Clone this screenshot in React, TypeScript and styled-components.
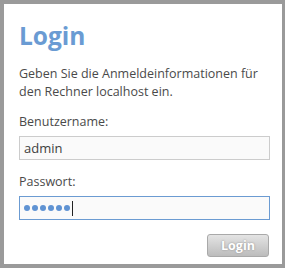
import React from "react";
import styled, { createGlobalStyle } from "styled-components";

const Global = createGlobalStyle`
  html, body { margin: 0; padding: 0; background: #9a9a9a; }
  body { width: 285px; height: 268px; overflow: hidden; }
`;

const Frame = styled.div`
  box-sizing: border-box;
  width: 285px;
  height: 268px;
  padding: 4px 3px 4px 4px;
  background: #9a9a9a;
`;

const Card = styled.div`
  box-sizing: border-box;
  height: 100%;
  background: #ffffff;
  padding: 16px 10px 0 15px;
  font-family: "Open Sans", "Noto Sans", sans-serif;
  color: #4a4a4a;
  display: flex;
  flex-direction: column;
`;

const Title = styled.h1`
  margin: 0;
  font-size: 24.5px;
  line-height: 32px;
  font-weight: 700;
  color: #6a9bd3;
`;

const Intro = styled.p`
  margin: 13px 0 0 0;
  font-size: 12.5px;
  line-height: 18px;
`;

const Label = styled.label<{ $mt: number }>`
  display: block;
  margin-top: ${(p) => p.$mt}px;
  font-size: 12.5px;
  line-height: 16px;
`;

const Field = styled.div<{ $focus?: boolean }>`
  box-sizing: border-box;
  margin-top: 6px;
  width: 251px;
  height: 24px;
  border: 1px solid ${(p) => (p.$focus ? "#6b9bd2" : "#cccccc")};
  background: #fafafa;
  display: flex;
  align-items: center;
  padding-left: 4px;
  font-size: 13px;
  color: #404040;
`;

const Dots = styled.span`
  display: flex;
  align-items: center;
`;

const Dot = styled.span`
  width: 6px;
  height: 6px;
  border-radius: 50%;
  background: #5f93d3;
  margin-right: 2px;
`;

const Caret = styled.span`
  width: 1px;
  height: 15px;
  background: #222;
`;

const Actions = styled.div`
  display: flex;
  justify-content: flex-end;
  margin-top: 14px;
  width: 251px;
`;

const Button = styled.button`
  box-sizing: border-box;
  width: 62px;
  height: 23px;
  border: 1px solid #a9a9a9;
  border-radius: 3px;
  background: linear-gradient(#e4e4e4, #bcbcbc);
  color: #ffffff;
  font-family: "Open Sans", "Noto Sans", sans-serif;
  font-weight: 700;
  font-size: 12.5px;
  text-shadow: 0 0 2px #8a8a8a;
  padding: 0;
  margin-right: 1px;
`;

export default function App() {
  return (
    <Frame>
      <Global />
      <Card>
        <Title>Login</Title>
        <Intro>
          Geben Sie die Anmeldeinformationen für
          <br />
          den Rechner localhost ein.
        </Intro>
        <Label $mt={13}>Benutzername:</Label>
        <Field>admin</Field>
        <Label $mt={14}>Passwort:</Label>
        <Field $focus>
          <Dots>
            {Array.from({ length: 6 }).map((_, i) => (
              <Dot key={i} />
            ))}
          </Dots>
          <Caret />
        </Field>
        <Actions>
          <Button>Login</Button>
        </Actions>
      </Card>
    </Frame>
  );
}
